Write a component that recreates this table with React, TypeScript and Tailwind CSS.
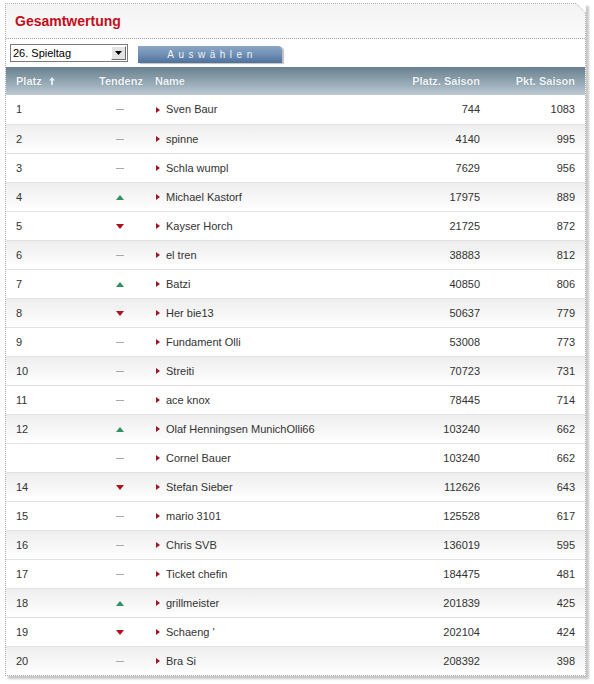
type Trend = 'same' | 'up' | 'down';

type Entry = {
  rank: string;
  trend: Trend;
  name: string;
  seasonRank: number;
  points: number;
};

const entries: Entry[] = [
  { rank: '1', trend: 'same', name: 'Sven Baur', seasonRank: 744, points: 1083 },
  { rank: '2', trend: 'same', name: 'spinne', seasonRank: 4140, points: 995 },
  { rank: '3', trend: 'same', name: 'Schla wumpl', seasonRank: 7629, points: 956 },
  { rank: '4', trend: 'up', name: 'Michael Kastorf', seasonRank: 17975, points: 889 },
  { rank: '5', trend: 'down', name: 'Kayser Horch', seasonRank: 21725, points: 872 },
  { rank: '6', trend: 'same', name: 'el tren', seasonRank: 38883, points: 812 },
  { rank: '7', trend: 'up', name: 'Batzi', seasonRank: 40850, points: 806 },
  { rank: '8', trend: 'down', name: 'Her bie13', seasonRank: 50637, points: 779 },
  { rank: '9', trend: 'same', name: 'Fundament Olli', seasonRank: 53008, points: 773 },
  { rank: '10', trend: 'same', name: 'Streiti', seasonRank: 70723, points: 731 },
  { rank: '11', trend: 'same', name: 'ace knox', seasonRank: 78445, points: 714 },
  { rank: '12', trend: 'up', name: 'Olaf Henningsen MunichOlli66', seasonRank: 103240, points: 662 },
  { rank: '', trend: 'same', name: 'Cornel Bauer', seasonRank: 103240, points: 662 },
  { rank: '14', trend: 'down', name: 'Stefan Sieber', seasonRank: 112626, points: 643 },
  { rank: '15', trend: 'same', name: 'mario 3101', seasonRank: 125528, points: 617 },
  { rank: '16', trend: 'same', name: 'Chris SVB', seasonRank: 136019, points: 595 },
  { rank: '17', trend: 'same', name: 'Ticket chefin', seasonRank: 184475, points: 481 },
  { rank: '18', trend: 'up', name: 'grillmeister', seasonRank: 201839, points: 425 },
  { rank: '19', trend: 'down', name: "Schaeng '", seasonRank: 202104, points: 424 },
  { rank: '20', trend: 'same', name: 'Bra Si', seasonRank: 208392, points: 398 }
];

const cols = 'grid grid-cols-[80px_50px_1fr_120px_95px] items-center px-[10px]';

function TrendIcon({ trend }: { trend: Trend }) {
  if (trend === 'up') {
    return (
      <svg width="8" height="5" viewBox="0 0 8 5" className="block">
        <polygon points="0,5 8,5 4,0" fill="#2f8f66" />
      </svg>
    );
  }
  if (trend === 'down') {
    return (
      <svg width="8" height="5" viewBox="0 0 8 5" className="block">
        <polygon points="0,0 8,0 4,5" fill="#b0101f" />
      </svg>
    );
  }
  return <span className="block h-px w-[8px] bg-[#a8a8a8]" />;
}

export default function App() {
  return (
    <div className="h-[684px] w-[594px] bg-white pl-[5px] pt-[3px] font-['Liberation_Sans',Arial,sans-serif]">
      <div className="relative w-[581px] border border-dotted border-[#a9a9a9] shadow-[3px_3px_2px_rgba(0,0,0,0.22)]">
        {/* bevelled top-right corner */}
        <svg width="10" height="10" viewBox="0 0 10 10" className="absolute -right-px -top-px">
          <polygon points="0,0 10,0 10,10" fill="#ffffff" />
          <line x1="0" y1="0.5" x2="9.5" y2="10" stroke="#a9a9a9" strokeDasharray="1 1" />
        </svg>

        <div className="flex h-[35px] items-center border-b border-dotted border-[#a9a9a9] bg-gradient-to-b from-[#f3f3f3] to-[#fbfbfb] px-[9px]">
          <h1 className="text-[14px] font-bold text-[#c20e1a]">Gesamtwertung</h1>
        </div>

        <div className="flex h-[28px] items-center gap-[10px] px-[4px]">
          <div className="flex h-[18px] w-[118px] items-center border border-[#7a7a7a] bg-white">
            <span className="flex-1 pl-[2px] text-[11px] text-black">26. Spieltag</span>
            <span className="mr-px flex h-[14px] w-[15px] items-center justify-center border border-t-white border-l-white border-r-[#6b6b6b] border-b-[#6b6b6b] bg-[#e4e4e4]">
              <svg width="7" height="4" viewBox="0 0 7 4">
                <polygon points="0,0 7,0 3.5,4" fill="#000" />
              </svg>
            </span>
          </div>
          <button className="mt-[3px] flex h-[17px] w-[144px] items-center justify-center rounded-tr-[4px] bg-gradient-to-b from-[#8aa6c4] via-[#6f8fb4] to-[#4f719a] pl-[4px] text-[10px] tracking-[4.5px] text-[#eef3f8] shadow-[2px_1px_1px_rgba(0,0,0,0.25)]">
            Auswählen
          </button>
        </div>

        <div className={`${cols} h-[28px] bg-gradient-to-b from-[#67808f] to-[#bccad3] text-[11px] font-bold text-[#f2f5f7] [text-shadow:0_0_1px_rgba(60,80,95,0.5)]`}>
          <div className="flex items-center gap-[7px]">
            <span>Platz</span>
            <svg width="6" height="8" viewBox="0 0 6 8">
              <polygon points="3,0 6,3.5 4,3.5 4,8 2,8 2,3.5 0,3.5" fill="#e6ecf0" />
            </svg>
          </div>
          <div className="text-center">Tendenz</div>
          <div className="pl-[9px]">Name</div>
          <div className="text-right">Platz. Saison</div>
          <div className="text-right">Pkt. Saison</div>
        </div>

        <div className="flex flex-col">
          {entries.map((entry, index) => (
            <div
              key={entry.name}
              className={`${cols} h-[29px] border-t border-[#e2e2e2] text-[11px] text-[#333] first:border-t-0 ${
                index % 2 === 1 ? 'bg-gradient-to-b from-[#eeeeee] to-white' : 'bg-white'
              }`}
            >
              <div>{entry.rank}</div>
              <div className="flex justify-center pr-[2px]">
                <TrendIcon trend={entry.trend} />
              </div>
              <div className="flex items-center gap-[6px] pl-[10px]">
                <svg width="4" height="6" viewBox="0 0 4 6" className="shrink-0">
                  <polygon points="0,0 4,3 0,6" fill="#9a1628" />
                </svg>
                <span>{entry.name}</span>
              </div>
              <div className="text-right">{entry.seasonRank}</div>
              <div className="text-right">{entry.points}</div>
            </div>
          ))}
        </div>
      </div>
    </div>
  );
}
